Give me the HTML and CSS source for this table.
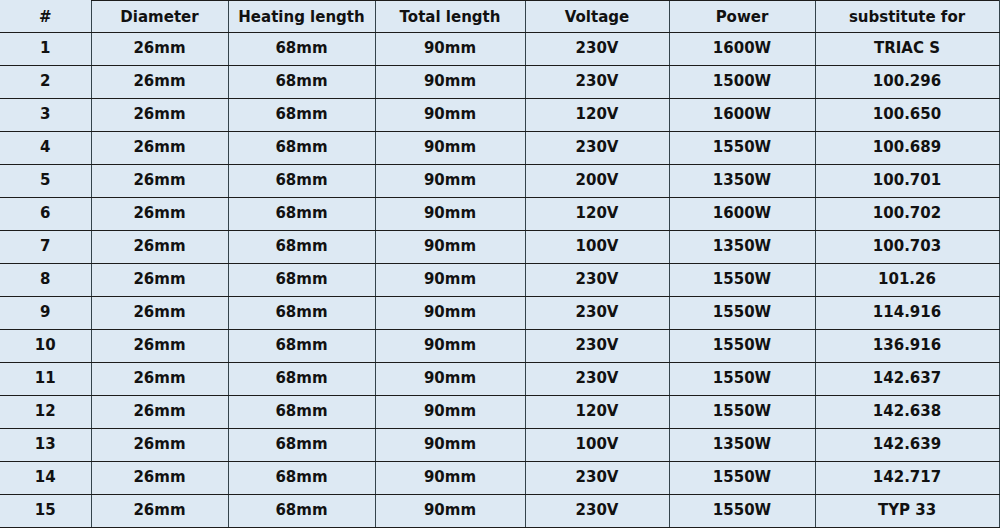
FILE: index.html
```html
<!DOCTYPE html>
<html>
<head>
<meta charset="utf-8">
<link rel="stylesheet" href="styles.css">
</head>
<body>
<table class="spec">
<colgroup>
<col class="c0"><col class="c1"><col class="c2"><col class="c3"><col class="c4"><col class="c5"><col class="c6">
</colgroup>
<thead>
<tr><th>#</th><th>Diameter</th><th>Heating length</th><th>Total length</th><th>Voltage</th><th>Power</th><th>substitute for</th></tr>
</thead>
<tbody>
<tr><td>1</td><td>26mm</td><td>68mm</td><td>90mm</td><td>230V</td><td>1600W</td><td>TRIAC S</td></tr>
<tr><td>2</td><td>26mm</td><td>68mm</td><td>90mm</td><td>230V</td><td>1500W</td><td>100.296</td></tr>
<tr><td>3</td><td>26mm</td><td>68mm</td><td>90mm</td><td>120V</td><td>1600W</td><td>100.650</td></tr>
<tr><td>4</td><td>26mm</td><td>68mm</td><td>90mm</td><td>230V</td><td>1550W</td><td>100.689</td></tr>
<tr><td>5</td><td>26mm</td><td>68mm</td><td>90mm</td><td>200V</td><td>1350W</td><td>100.701</td></tr>
<tr><td>6</td><td>26mm</td><td>68mm</td><td>90mm</td><td>120V</td><td>1600W</td><td>100.702</td></tr>
<tr><td>7</td><td>26mm</td><td>68mm</td><td>90mm</td><td>100V</td><td>1350W</td><td>100.703</td></tr>
<tr><td>8</td><td>26mm</td><td>68mm</td><td>90mm</td><td>230V</td><td>1550W</td><td>101.26</td></tr>
<tr><td>9</td><td>26mm</td><td>68mm</td><td>90mm</td><td>230V</td><td>1550W</td><td>114.916</td></tr>
<tr><td>10</td><td>26mm</td><td>68mm</td><td>90mm</td><td>230V</td><td>1550W</td><td>136.916</td></tr>
<tr><td>11</td><td>26mm</td><td>68mm</td><td>90mm</td><td>230V</td><td>1550W</td><td>142.637</td></tr>
<tr><td>12</td><td>26mm</td><td>68mm</td><td>90mm</td><td>120V</td><td>1550W</td><td>142.638</td></tr>
<tr><td>13</td><td>26mm</td><td>68mm</td><td>90mm</td><td>100V</td><td>1350W</td><td>142.639</td></tr>
<tr><td>14</td><td>26mm</td><td>68mm</td><td>90mm</td><td>230V</td><td>1550W</td><td>142.717</td></tr>
<tr><td>15</td><td>26mm</td><td>68mm</td><td>90mm</td><td>230V</td><td>1550W</td><td>TYP 33</td></tr>
</tbody>
</table>
</body>
</html>
```
FILE: styles.css
```css
html, body {
  margin: 0;
  padding: 0;
  background: #dde9f3;
}
.spec {
  border-collapse: collapse;
  table-layout: fixed;
  width: 999px;
  font-family: "DejaVu Sans", Verdana, sans-serif;
  font-weight: bold;
  font-size: 15px;
  color: #111;
}
.c0 { width: 91px; }
.c1 { width: 137px; }
.c2 { width: 147px; }
.c3 { width: 150px; }
.c4 { width: 144px; }
.c5 { width: 146px; }
.c6 { width: 184px; }
.spec th, .spec td {
  height: 33px;
  padding: 0 0 3px 0;
  box-sizing: border-box;
  text-align: center;
  vertical-align: middle;
  white-space: nowrap;
  border-bottom: 1px solid #1c1c1c;
  border-left: 1px solid #34444c;
  font-weight: bold;
}
.spec th {
  height: 32px;
  padding: 1px 0 0 0;
  border-top: 1px solid #1c1c1c;
}
.spec th:first-child { border-top: none; }
.spec th:first-child, .spec td:first-child { border-left: none; }
.spec th:last-child, .spec td:last-child { border-right: 1px solid #34444c; }
```
